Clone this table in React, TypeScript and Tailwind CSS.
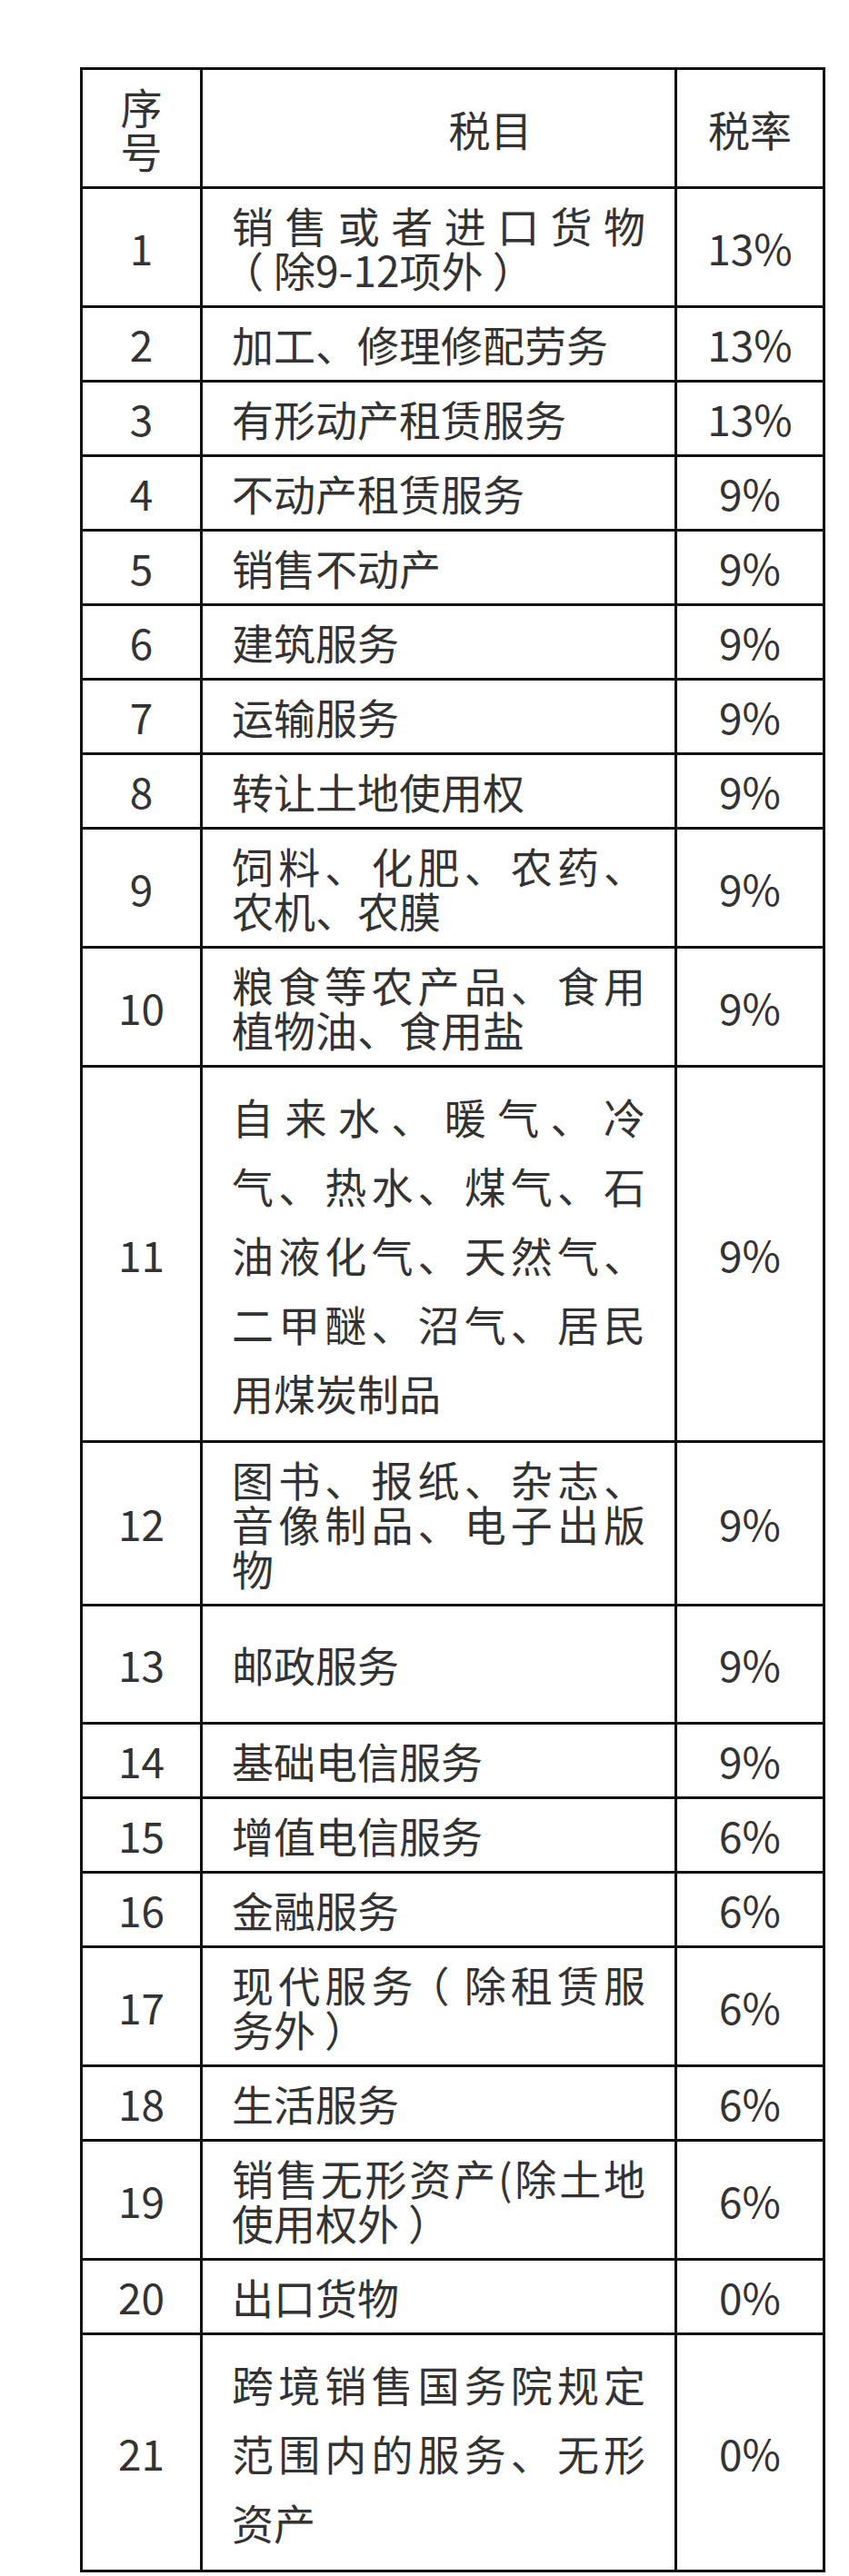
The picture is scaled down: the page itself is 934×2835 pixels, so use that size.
type Row = {
  no: string;
  item: string;
  rate: string;
  loose?: boolean;
  tall?: boolean;
};

const rows: Row[] = [
  { no: "1", item: "销售或者进口货物（除9-12项外）", rate: "13%" },
  { no: "2", item: "加工、修理修配劳务", rate: "13%" },
  { no: "3", item: "有形动产租赁服务", rate: "13%" },
  { no: "4", item: "不动产租赁服务", rate: "9%" },
  { no: "5", item: "销售不动产", rate: "9%" },
  { no: "6", item: "建筑服务", rate: "9%" },
  { no: "7", item: "运输服务", rate: "9%" },
  { no: "8", item: "转让土地使用权", rate: "9%" },
  { no: "9", item: "饲料、化肥、农药、农机、农膜", rate: "9%" },
  { no: "10", item: "粮食等农产品、食用植物油、食用盐", rate: "9%" },
  {
    no: "11",
    item: "自来水、暖气、冷气、热水、煤气、石油液化气、天然气、二甲醚、沼气、居民用煤炭制品",
    rate: "9%",
    loose: true,
  },
  { no: "12", item: "图书、报纸、杂志、音像制品、电子出版物", rate: "9%" },
  { no: "13", item: "邮政服务", rate: "9%", tall: true },
  { no: "14", item: "基础电信服务", rate: "9%" },
  { no: "15", item: "增值电信服务", rate: "6%" },
  { no: "16", item: "金融服务", rate: "6%" },
  { no: "17", item: "现代服务（除租赁服务外）", rate: "6%" },
  { no: "18", item: "生活服务", rate: "6%" },
  { no: "19", item: "销售无形资产(除土地使用权外）", rate: "6%" },
  { no: "20", item: "出口货物", rate: "0%" },
  { no: "21", item: "跨境销售国务院规定范围内的服务、无形资产", rate: "0%", loose: true },
];

const cell = "border-[3px] border-[#111] px-[32px] py-[15px] align-middle";

// full-width brackets in the screenshot sit centred in their em box
function ItemText({ text }: { text: string }) {
  const parts = text.split(/([（）])/);
  return (
    <>
      {parts.map((p, i) => {
        if (p === "（")
          return (
            <span key={i} className="ml-[-0.24em] mr-[0.24em]">
              {p}
            </span>
          );
        if (p === "）")
          return (
            <span key={i} className="ml-[0.22em] mr-[-0.22em]">
              {p}
            </span>
          );
        return p;
      })}
    </>
  );
}

export default function App() {
  return (
    <div
      className="min-h-[2835px] bg-white pt-[74px] pl-[88px] text-[46px] leading-[49px] text-[#333]"
      style={{ fontFamily: '"Noto Sans CJK SC", "Noto Sans", sans-serif' }}
    >
      <table className="table-fixed border-collapse w-[817px]">
        <colgroup>
          <col className="w-[132px]" />
          <col className="w-[522px]" />
          <col className="w-[163px]" />
        </colgroup>
        <thead>
          <tr>
            <th className={`${cell} text-center font-normal`}>序号</th>
            <th className={`${cell} pl-[146px] text-center font-normal`}>税目</th>
            <th className={`${cell} text-center font-normal`}>税率</th>
          </tr>
        </thead>
        <tbody>
          {rows.map((r) => (
            <tr key={r.no} className={r.tall ? "h-[130px]" : ""}>
              <td className={`${cell} text-center`}>{r.no}</td>
              <td className={`${cell} text-justify ${r.loose ? "leading-[76px]" : ""}`}>
                <ItemText text={r.item} />
              </td>
              <td className={`${cell} text-center`}>{r.rate}</td>
            </tr>
          ))}
        </tbody>
      </table>
    </div>
  );
}
